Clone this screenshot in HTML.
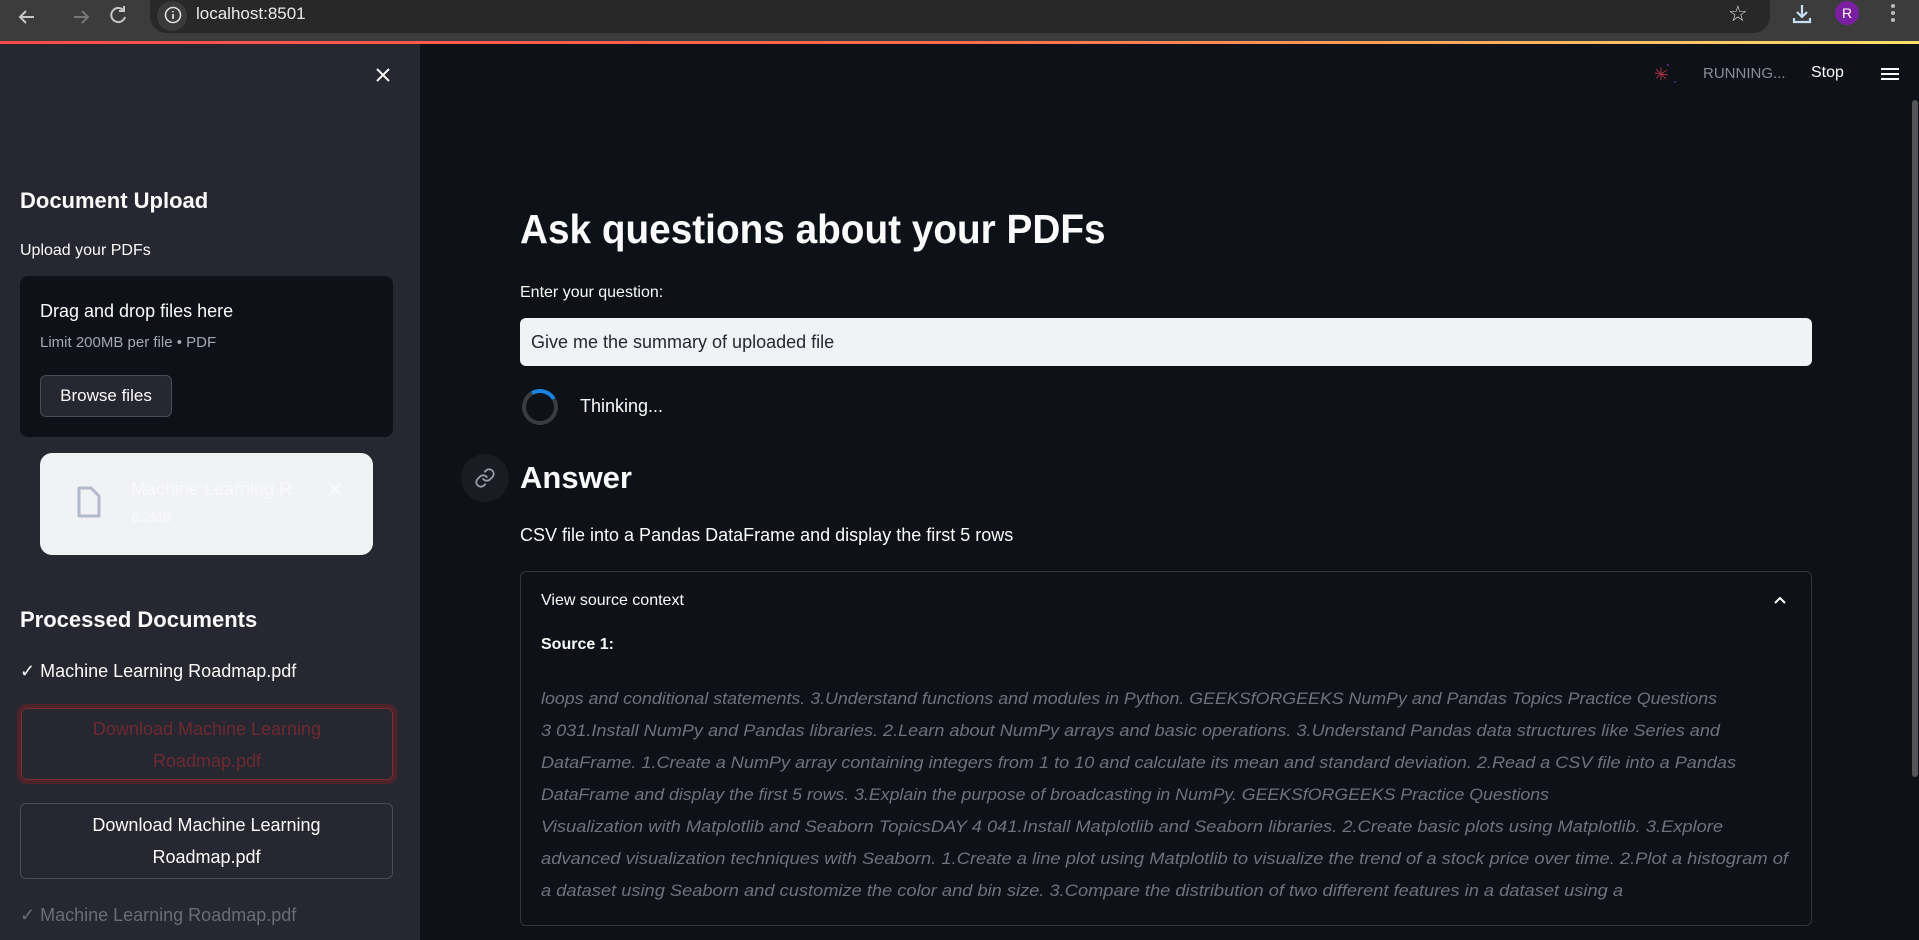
<!DOCTYPE html>
<html><head><meta charset="utf-8"><style>
*{margin:0;padding:0;box-sizing:border-box}
body{width:1919px;height:940px;overflow:hidden;background:#0e1117;font-family:"Liberation Sans",sans-serif;color:#fafafa;position:relative}
.a{position:absolute;white-space:nowrap}
</style></head><body>
<!-- browser chrome -->
<div class="a" style="left:0;top:0;width:1919px;height:41px;background:#3c3c3c"></div>
<div class="a" style="left:0;top:41px;width:1919px;height:3px;background:linear-gradient(90deg,#ff4b4b,#ff6c4b 50%,#ffe36b)"></div>
<svg class="a" style="left:14px;top:4px" width="80" height="26" viewBox="0 0 80 26" fill="none" stroke-width="2">
<path d="M20 13H7M12 7l-6 6 6 6" stroke="#c7c7c7"/>
<path d="M60 13h13M68 7l6 6-6 6" stroke="#777"/>
</svg>
<svg class="a" style="left:105px;top:3px" width="26" height="26" viewBox="0 0 26 26" fill="none" stroke="#c7c7c7" stroke-width="2"><path d="M19 8a7 7 0 1 0 1 6"/><path d="M19 3v5h-5"/></svg>
<div class="a" style="left:150px;top:0;width:1620px;height:33px;background:#282828;border-radius:0 0 17px 17px"></div>
<div class="a" style="left:157px;top:1px;width:30px;height:30px;border-radius:15px;background:#3a3a3a"></div>
<svg class="a" style="left:163px;top:5px" width="20" height="20" viewBox="0 0 20 20"><circle cx="10" cy="10" r="7.5" fill="none" stroke="#ddd" stroke-width="1.6"/><path d="M10 9v5M10 6v1.2" stroke="#ddd" stroke-width="1.8"/></svg>
<div class="a" style="left:196px;top:4px;font-size:17px;color:#e8eaed">localhost:8501</div>
<div class="a" style="left:1728px;top:1px;font-size:22px;color:#ddd">☆</div>
<svg class="a" style="left:1791px;top:3px" width="22" height="22" viewBox="0 0 22 22" fill="none" stroke="#c8dcf5" stroke-width="2.2"><path d="M11 2v11M6 9l5 5 5-5M3 15v4h16v-4"/></svg>
<div class="a" style="left:1835px;top:1px;width:24px;height:24px;border-radius:12px;background:#7b1fa2;color:#fff;font-size:14px;text-align:center;line-height:24px">R</div>
<div class="a" style="left:1891px;top:4px;width:4px;height:4px;border-radius:2px;background:#bbb;box-shadow:0 7px #bbb,0 14px #bbb"></div>

<!-- sidebar -->
<div class="a" style="left:0;top:44px;width:420px;height:896px;background:#262730"></div>
<svg class="a" style="left:374px;top:66px" width="18" height="18" viewBox="0 0 18 18" stroke="#fafafa" stroke-width="2"><path d="M3 3l12 12M15 3L3 15"/></svg>
<div class="a" style="left:20px;top:188px;font-size:22px;font-weight:bold">Document Upload</div>
<div class="a" style="left:20px;top:242px;font-size:16px">Upload your PDFs</div>
<div class="a" style="left:20px;top:276px;width:373px;height:161px;background:#0e1117;border-radius:8px"></div>
<div class="a" style="left:40px;top:301px;font-size:18px">Drag and drop files here</div>
<div class="a" style="left:40px;top:334px;font-size:15px;color:#a3a8b4">Limit 200MB per file • PDF</div>
<div class="a" style="left:40px;top:375px;width:132px;height:42px;border:1px solid #4a4c55;border-radius:6px;background:#262730;font-size:17px;text-align:center;line-height:40px">Browse files</div>
<div class="a" style="left:40px;top:453px;width:333px;height:102px;background:#f0f2f6;border-radius:12px"></div>
<svg class="a" style="left:76px;top:486px" width="26" height="32" viewBox="0 0 26 32"><path d="M3 2h12l8 8v20H3z" fill="none" stroke="#b4b9c9" stroke-width="3" stroke-linejoin="round"/></svg>
<div class="a" style="left:131px;top:479px;font-size:18px;color:#fafafa">Machine Learning R…</div>
<div class="a" style="left:131px;top:509px;font-size:14px;color:#fafafa">6.2MB</div>
<svg class="a" style="left:327px;top:481px" width="16" height="16" viewBox="0 0 16 16" stroke="#fafafa" stroke-width="2"><path d="M2 2l12 12M14 2L2 14"/></svg>
<div class="a" style="left:20px;top:607px;font-size:22px;font-weight:bold">Processed Documents</div>
<div class="a" style="left:20px;top:661px;font-size:18px">✓ Machine Learning Roadmap.pdf</div>
<div class="a" style="left:17px;top:704px;width:380px;height:80px;border:4px solid #4d2429;border-radius:9px"></div>
<div class="a" style="left:21px;top:708px;width:372px;height:72px;border:1px solid #7a2d33;border-radius:6px;text-align:center;font-size:18px;line-height:32px;padding-top:4px;color:#6e2a31;white-space:normal">Download Machine Learning<br>Roadmap.pdf</div>
<div class="a" style="left:20px;top:803px;width:373px;height:76px;border:1px solid #4a4c55;border-radius:6px;text-align:center;font-size:18px;line-height:32px;padding-top:5px;white-space:normal">Download Machine Learning<br>Roadmap.pdf</div>
<div class="a" style="left:20px;top:905px;font-size:18px;color:#6b6d75">✓ Machine Learning Roadmap.pdf</div>

<!-- header right -->
<svg class="a" style="left:1650px;top:62px" width="30" height="30" viewBox="0 0 30 30" stroke="#a03040" stroke-width="1"><path d="M11 12l0-7M11 12l6-4M11 12l7 1M11 12l5 5M11 12l0 6M11 12l-5 4M11 12l-6-1M11 12l-5-5"/><circle cx="18" cy="3" r="1" fill="#7a2aa0" stroke="none"/><circle cx="25" cy="20" r="1" fill="#33338a" stroke="none"/></svg>
<div class="a" style="left:1703px;top:65px;font-size:15px;color:#8b8d96">RUNNING...</div>
<div class="a" style="left:1811px;top:64px;font-size:16px;color:#fafafa">Stop</div>
<div class="a" style="left:1881px;top:68px;width:18px;height:2px;background:#fafafa;box-shadow:0 5px #fafafa,0 10px #fafafa"></div>
<div class="a" style="left:1912px;top:100px;width:6px;height:677px;background:#555;border-radius:3px"></div>

<!-- main -->
<div class="a" style="left:520px;top:206px;font-size:41px;font-weight:bold;transform:scaleX(0.945);transform-origin:left">Ask questions about your PDFs</div>
<div class="a" style="left:520px;top:284px;font-size:16px">Enter your question:</div>
<div class="a" style="left:520px;top:318px;width:1292px;height:48px;background:#f0f2f6;border-radius:6px"></div>
<div class="a" style="left:531px;top:332px;font-size:18px;color:#262730">Give me the summary of uploaded file</div>
<div class="a" style="left:522px;top:389px;width:36px;height:36px;border-radius:50%;border:4px solid #3a3c44;border-top-color:#1c83e1;transform:rotate(15deg)"></div>
<div class="a" style="left:580px;top:396px;font-size:18px">Thinking...</div>
<div class="a" style="left:461px;top:454px;width:48px;height:48px;border-radius:24px;background:#1a1c24"></div>
<svg class="a" style="left:474px;top:467px" width="22" height="22" viewBox="0 0 24 24" fill="none" stroke="#9a9ca5" stroke-width="2" stroke-linecap="round"><path d="M10 13a5 5 0 0 0 7.5.5l3-3a5 5 0 0 0-7-7l-1.7 1.7"/><path d="M14 11a5 5 0 0 0-7.5-.5l-3 3a5 5 0 0 0 7 7l1.7-1.7"/></svg>
<div class="a" style="left:520px;top:460px;font-size:31px;font-weight:bold">Answer</div>
<div class="a" style="left:520px;top:525px;font-size:18px">CSV file into a Pandas DataFrame and display the first 5 rows</div>
<div class="a" style="left:520px;top:571px;width:1292px;height:355px;border:1px solid #32343c;border-radius:6px"></div>
<div class="a" style="left:541px;top:592px;font-size:16px">View source context</div>
<svg class="a" style="left:1772px;top:594px" width="16" height="12" viewBox="0 0 16 12" fill="none" stroke="#fafafa" stroke-width="2"><path d="M3 9l5-5 5 5"/></svg>
<div class="a" style="left:541px;top:636px;font-size:16px;font-weight:bold">Source 1:</div>
<svg class="a" style="left:541px;top:680px" width="1260" height="240" font-family="Liberation Sans, sans-serif" font-size="17" font-style="italic" fill="#6f727b">
<text x="0" y="24" textLength="1176" lengthAdjust="spacingAndGlyphs">loops and conditional statements. 3.Understand functions and modules in Python. GEEKSfORGEEKS NumPy and Pandas Topics Practice Questions</text>
<text x="0" y="56" textLength="1179" lengthAdjust="spacingAndGlyphs">3 031.Install NumPy and Pandas libraries. 2.Learn about NumPy arrays and basic operations. 3.Understand Pandas data structures like Series and</text>
<text x="0" y="88" textLength="1195" lengthAdjust="spacingAndGlyphs">DataFrame. 1.Create a NumPy array containing integers from 1 to 10 and calculate its mean and standard deviation. 2.Read a CSV file into a Pandas</text>
<text x="0" y="120" textLength="1008" lengthAdjust="spacingAndGlyphs">DataFrame and display the first 5 rows. 3.Explain the purpose of broadcasting in NumPy. GEEKSfORGEEKS Practice Questions</text>
<text x="0" y="152" textLength="1182" lengthAdjust="spacingAndGlyphs">Visualization with Matplotlib and Seaborn TopicsDAY 4 041.Install Matplotlib and Seaborn libraries. 2.Create basic plots using Matplotlib. 3.Explore</text>
<text x="0" y="184" textLength="1247" lengthAdjust="spacingAndGlyphs">advanced visualization techniques with Seaborn. 1.Create a line plot using Matplotlib to visualize the trend of a stock price over time. 2.Plot a histogram of</text>
<text x="0" y="216" textLength="1082" lengthAdjust="spacingAndGlyphs">a dataset using Seaborn and customize the color and bin size. 3.Compare the distribution of two different features in a dataset using a</text>
</svg>
</body></html>
